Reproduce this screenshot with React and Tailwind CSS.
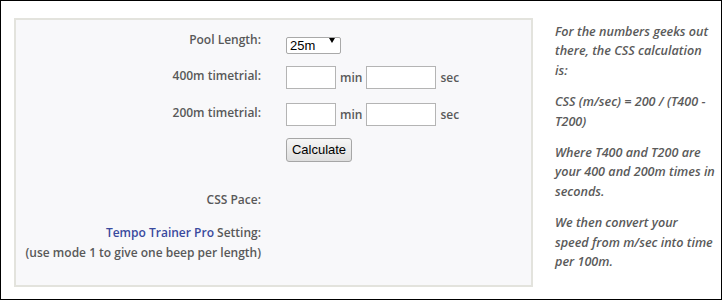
import { useState } from "react";

const labelCls = "w-[245px] shrink-0 text-right text-[12px] leading-[20px] font-semibold text-[#595959]";

function TimeInputs() {
	return (
		<div className="flex items-center gap-[4px] text-[12px] font-semibold text-[#595959]">
			<input className="w-[50px] h-[23px] bg-white border border-[#b4b4b4] outline-none" />
			<span>min</span>
			<input className="w-[70px] h-[23px] bg-white border border-[#b4b4b4] outline-none" />
			<span>sec</span>
		</div>
	);
}

export default function App() {
	const [pool, setPool] = useState("25m");

	return (
		<div
			className="w-[722px] h-[300px] border border-black bg-white overflow-hidden"
			style={{ fontFamily: "'Open Sans', 'Noto Sans', sans-serif" }}
		>
			{/* cut off line from above */}
			<div className="h-[3px] overflow-hidden pl-[14px]">
				<p className="-mt-[17px] text-[13px] leading-[18px] text-[#444] whitespace-nowrap">
					Simply put in your results and we will figure out your pace for you
				</p>
			</div>

			<div className="flex">
				{/* Calculator box */}
				<div className="ml-[13px] mt-[14px] w-[519px] h-[269px] border-2 border-[#e3e3dd] bg-[#f8f8fa] pt-[10px]">
					<div className="flex items-center gap-[25px]">
						<div className={labelCls}>Pool Length:</div>
						<div className="relative w-[55px] h-[17px]">
							<select
								value={pool}
								onChange={(e) => setPool(e.target.value)}
								className="appearance-none w-full h-full bg-white border border-[#a9a9a9] rounded-[2px] pl-[3px] text-[13px] leading-[15px] text-black outline-none"
								style={{ fontFamily: "'Liberation Sans', Arial, sans-serif" }}
							>
								<option>25m</option>
								<option>50m</option>
								<option>25y</option>
							</select>
							<span className="pointer-events-none absolute right-[6px] top-[6px] w-0 h-0 border-l-[3px] border-r-[3px] border-t-[5px] border-l-transparent border-r-transparent border-t-black"></span>
						</div>
					</div>

					<div className="flex items-start gap-[25px] mt-[16px]">
						<div className={labelCls}>400m timetrial:</div>
						<TimeInputs />
					</div>

					<div className="flex items-start gap-[25px] mt-[14px]">
						<div className={labelCls}>200m timetrial:</div>
						<TimeInputs />
					</div>

					<div className="flex gap-[25px] mt-[12px]">
						<div className="w-[245px] shrink-0"></div>
						<button
							type="button"
							className="w-[66px] h-[24px] border border-[#a6a6a6] rounded-[3px] bg-gradient-to-b from-[#f6f6f6] to-[#dedede] text-[13px] text-black"
							style={{ fontFamily: "'Liberation Sans', Arial, sans-serif" }}
						>
							Calculate
						</button>
					</div>

					<div className="flex gap-[25px] mt-[28px]">
						<div className={labelCls}>CSS Pace:</div>
					</div>

					<div className="flex gap-[25px] mt-[13px]">
						<div className={labelCls}>
							<span className="text-[#3a4a9e]">Tempo Trainer Pro</span> Setting:
							<br />
							(use mode 1 to give one beep per length)
						</div>
					</div>
				</div>

				{/* Notes column */}
				<div className="ml-[22px] mt-[18px] w-[166px] text-[12.6px] leading-[19.4px] italic font-semibold text-[#5a5a5a] whitespace-nowrap">
					<p className="mb-[12px]">
						For the numbers geeks out
						<br />
						there, the CSS calculation
						<br />
						is:
					</p>
					<p className="mb-[12px]">
						CSS (m/sec) = 200 / (T400 -
						<br />
						T200)
					</p>
					<p className="mb-[12px]">
						Where T400 and T200 are
						<br />
						your 400 and 200m times in
						<br />
						seconds.
					</p>
					<p>
						We then convert your
						<br />
						speed from m/sec into time
						<br />
						per 100m.
					</p>
				</div>
			</div>
		</div>
	);
}
